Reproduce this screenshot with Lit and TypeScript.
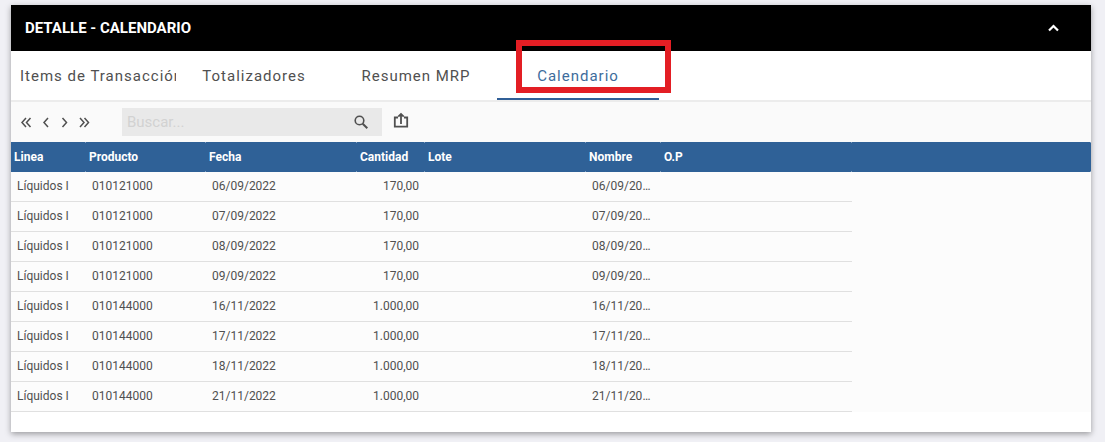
import { LitElement, html, css, svg } from "lit";
import { customElement, state } from "lit/decorators.js";
import { classMap } from "lit/directives/class-map.js";

interface Row {
  linea: string;
  producto: string;
  fecha: string;
  cantidad: string;
}

const TABS = ["Items de Transacción", "Totalizadores", "Resumen MRP", "Calendario"];

const row = (producto: string, fecha: string, cantidad: string): Row => ({
  linea: "Líquidos I",
  producto,
  fecha,
  cantidad,
});

const ROWS: Row[] = [
  row("010121000", "06/09/2022", "170,00"),
  row("010121000", "07/09/2022", "170,00"),
  row("010121000", "08/09/2022", "170,00"),
  row("010121000", "09/09/2022", "170,00"),
  row("010144000", "16/11/2022", "1.000,00"),
  row("010144000", "17/11/2022", "1.000,00"),
  row("010144000", "18/11/2022", "1.000,00"),
  row("010144000", "21/11/2022", "1.000,00"),
];

const PAGER = [
  { label: "Primera página", path: "M7 3 3 7.500 7 12M11.500 3l-4 4.500 4 4.500" },
  { label: "Página anterior", path: "M10 3 6 7.500l4 4.500" },
  { label: "Página siguiente", path: "M5.500 3l4 4.500-4 4.500" },
  { label: "Última página", path: "M4 3l4 4.500L4 12M8.500 3l4 4.500-4 4.500" },
];

@customElement("app-root")
export class AppRoot extends LitElement {
  static styles = css`
    :host {
      display: block;
      box-sizing: border-box;
      min-height: 100vh;
      padding: 5px 14px 10px 11px;
      background: #f0f0f5;
      font-family: Roboto, "Liberation Sans", sans-serif;
      color: #505050;
    }
    * {
      box-sizing: border-box;
    }
    button {
      border: 0;
      padding: 0;
      background: none;
      color: inherit;
      font: inherit;
      cursor: pointer;
    }
    svg {
      display: block;
      fill: none;
      stroke: currentColor;
    }
    .card {
      background: #fff;
      padding-bottom: 20px;
      box-shadow: 0 2px 6px rgba(0, 0, 0, 0.36);
    }
    .head {
      display: flex;
      align-items: center;
      justify-content: space-between;
      height: 46px;
      padding: 0 30px 0 14px;
      background: #000;
      color: #fff;
    }
    .title {
      margin: 0;
      font-size: 15px;
      line-height: 20px;
      font-weight: 700;
    }
    .tabs {
      display: flex;
      height: 51px;
      border-bottom: 2px solid #ececec;
    }
    .tab {
      position: relative;
      flex: 0 1 162px;
      min-width: 0;
      height: 49px;
      font-size: 15px;
      line-height: 51px;
      letter-spacing: 1px;
    }
    .label {
      display: block;
      height: 49px;
      overflow: clip;
      overflow-clip-margin: 3px;
      padding-left: 9px;
      white-space: nowrap;
      text-align: left;
    }
    .label.centered {
      padding-left: 0;
      text-align: center;
    }
    .tab.active {
      color: #3d6c9c;
      box-shadow: inset 0 -2px #305f97;
    }
    .marker {
      position: absolute;
      inset: -11px -12px 7px 19px;
      border: 6px solid #e31e24;
      pointer-events: none;
    }
    .toolbar {
      display: flex;
      align-items: center;
      height: 40px;
      padding: 0 8px;
      background: #fafafa;
    }
    .pager {
      display: flex;
      gap: 4px;
      margin-right: 31px;
    }
    .search {
      display: flex;
      align-items: center;
      width: 260px;
      height: 28px;
      padding: 0 13px 0 5px;
      background: #e9e9e9;
    }
    .query {
      flex: 1;
      min-width: 0;
      border: 0;
      padding: 0;
      outline: 0;
      background: none;
      color: #505050;
      font: 15px/20px Roboto, "Liberation Sans", sans-serif;
    }
    .query::placeholder {
      color: #d2d2d2;
      opacity: 1;
    }
    .export {
      margin-left: 11px;
      padding-bottom: 2px;
    }
    .grid {
      width: 100%;
      table-layout: fixed;
      border-collapse: separate;
      border-spacing: 0;
      background: #fcfcfc;
      font-size: 12px;
    }
    .w-s { width: 75px; }
    .w-m { width: 120px; }
    .w-l { width: 151px; }
    .w-n { width: 68px; }
    .w-x { width: 161px; }
    .w-o { width: 191px; }
    .grid th {
      height: 30px;
      padding: 0 3px;
      background:
        linear-gradient(#7f9fc1, #7f9fc1) right top / 1px 1px no-repeat,
        linear-gradient(#7f9fc1, #7f9fc1) right bottom / 1px 1px no-repeat,
        #2f6197;
      color: #fff;
      font-weight: 700;
      text-align: left;
      white-space: nowrap;
    }
    .grid td {
      height: 30px;
      padding: 0 6px 2px;
      border-bottom: 1px solid #e0e0e0;
      overflow: hidden;
      text-overflow: ellipsis;
      white-space: nowrap;
    }
    .grid .num {
      text-align: right;
    }
    .grid .rest {
      border-bottom: 0;
    }
  `;

  @state() private active = 3;

  private tab(label: string, i: number) {
    const on = i === this.active;
    return html`<button
      class=${classMap({ tab: true, active: on })}
      role="tab"
      aria-selected=${on ? "true" : "false"}
      @click=${() => (this.active = i)}
    ><span class=${classMap({ label: true, centered: i > 0 })}>${label}</span>${on ? html`<span class="marker"></span>` : null}</button>`;
  }

  render() {
    return html`
      <section class="card">
        <header class="head">
          <h1 class="title">DETALLE - CALENDARIO</h1>
          <button aria-label="Contraer">
            <svg width="15" height="14" viewBox="0 0 15 14" stroke-width="2.200"><path d="M3 9.500 7.500 5l4.500 4.500" /></svg>
          </button>
        </header>
        <nav class="tabs" role="tablist">${TABS.map((t, i) => this.tab(t, i))}</nav>
        <div class="toolbar">
          <div class="pager">
            ${PAGER.map(
              (p) => html`<button aria-label=${p.label}>
                <svg width="15" height="15" viewBox="0 0 15 15" stroke-width="1.500">${svg`<path d=${p.path} />`}</svg>
              </button>`
            )}
          </div>
          <div class="search">
            <input class="query" type="text" placeholder="Buscar..." aria-label="Buscar" />
            <button aria-label="Ejecutar búsqueda">
              <svg width="16" height="16" viewBox="0 0 16 16" stroke-width="1.600">
                <circle cx="6.500" cy="6.500" r="4.300" /><path d="m9.700 9.700 4.600 4.600" stroke-width="2" />
              </svg>
            </button>
          </div>
          <button class="export" aria-label="Exportar">
            <svg width="16" height="18" viewBox="0 0 16 18" stroke-width="1.800">
              <path d="M5 5.500H1.800v9.200h12.400V5.500H11M8 12V2.500M5.300 4.600 8 1.900l2.700 2.700" />
            </svg>
          </button>
        </div>
        <table class="grid">
          <colgroup>
            <col class="w-s" /><col class="w-m" /><col class="w-l" /><col class="w-n" />
            <col class="w-x" /><col class="w-s" /><col class="w-o" /><col />
          </colgroup>
          <thead>
            <tr>
              <th>Linea</th><th>Producto</th><th>Fecha</th><th>Cantidad</th>
              <th>Lote</th><th>Nombre</th><th>O.P</th><th></th>
            </tr>
          </thead>
          <tbody>
            ${ROWS.map(
              (r) => html`<tr>
                <td>${r.linea}</td><td>${r.producto}</td><td>${r.fecha}</td><td class="num">${r.cantidad}</td>
                <td></td><td>${r.fecha}</td><td></td><td class="rest"></td>
              </tr>`
            )}
          </tbody>
        </table>
      </section>
    `;
  }
}
